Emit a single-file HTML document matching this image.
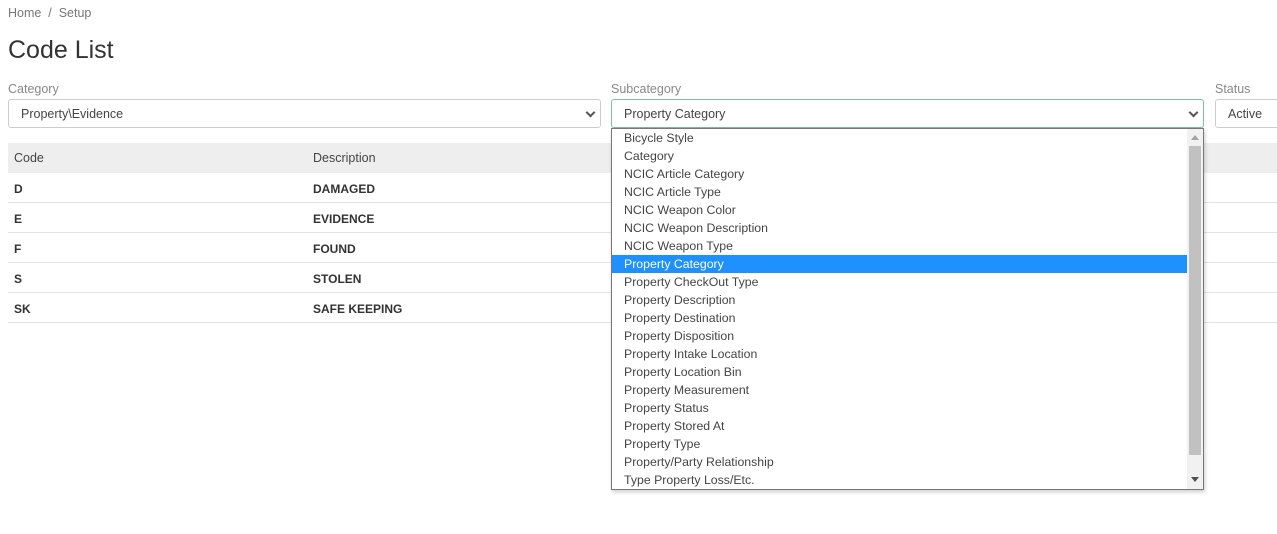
<!DOCTYPE html>
<html><head><style>
*{box-sizing:border-box;margin:0;padding:0}
body{width:1277px;height:534px;overflow:hidden;background:#fff;font-family:"Liberation Sans",sans-serif;color:#333;position:relative}
.a{position:absolute;white-space:nowrap}
.sel{position:absolute;border:1px solid #ccc;border-radius:3px;height:29px;top:99px;font-size:12.5px;padding:7px 12px;color:#444}
.lbl{position:absolute;top:82px;font-size:12.5px;color:#888}
.row{position:absolute;left:8px;width:1269px;height:30px;border-bottom:1px solid #e3e3e3;font-size:12px;font-weight:bold;color:#333}
.row span{position:absolute;top:9px}
.dd{position:absolute;left:611px;top:128px;width:593px;height:362px;border:1px solid #777;background:#fff;box-shadow:1px 2px 4px rgba(0,0,0,.2)}
.it{height:18px;font-size:12.3px;line-height:18px;padding-left:12px;color:#444;width:575px}
.hl{background:#1e90ff;color:#fff}
.chev{position:absolute;right:6px;top:9px;width:7px;height:7px;border-right:2px solid #555;border-bottom:2px solid #555;transform:rotate(45deg)}
</style></head><body>
<div class="a" style="left:8px;top:6px;font-size:12.5px;color:#777">Home &nbsp;/&nbsp; Setup</div>
<div class="a" style="left:8px;top:36px;font-size:25px;color:#333">Code List</div>
<div class="lbl" style="left:8px">Category</div>
<div class="lbl" style="left:611px">Subcategory</div>
<div class="lbl" style="left:1215px">Status</div>
<div class="sel" style="left:8px;width:593px">Property\Evidence<div class="chev"></div></div>
<div class="sel" style="left:611px;width:593px;border-color:#7fbf9f">Property Category<div class="chev"></div></div>
<div class="sel" style="left:1215px;width:80px">Active</div>
<div class="a" style="left:8px;top:143px;width:1269px;height:30px;background:#eee;font-size:12.5px;color:#444"><span class="a" style="left:6px;top:8px">Code</span><span class="a" style="left:305px;top:8px">Description</span></div>
<div class="row" style="top:173px"><span style="left:6px">D</span><span style="left:305px">DAMAGED</span></div>
<div class="row" style="top:203px"><span style="left:6px">E</span><span style="left:305px">EVIDENCE</span></div>
<div class="row" style="top:233px"><span style="left:6px">F</span><span style="left:305px">FOUND</span></div>
<div class="row" style="top:263px"><span style="left:6px">S</span><span style="left:305px">STOLEN</span></div>
<div class="row" style="top:293px"><span style="left:6px">SK</span><span style="left:305px">SAFE KEEPING</span></div>
<div class="dd">
<div class="it">Bicycle Style</div><div class="it">Category</div><div class="it">NCIC Article Category</div><div class="it">NCIC Article Type</div><div class="it">NCIC Weapon Color</div><div class="it">NCIC Weapon Description</div><div class="it">NCIC Weapon Type</div><div class="it hl">Property Category</div><div class="it">Property CheckOut Type</div><div class="it">Property Description</div><div class="it">Property Destination</div><div class="it">Property Disposition</div><div class="it">Property Intake Location</div><div class="it">Property Location Bin</div><div class="it">Property Measurement</div><div class="it">Property Status</div><div class="it">Property Stored At</div><div class="it">Property Type</div><div class="it">Property/Party Relationship</div><div class="it">Type Property Loss/Etc.</div>
<div class="a" style="left:575px;top:0;width:16px;height:360px;background:#f1f1f1"></div>
<div class="a" style="left:577px;top:17px;width:12px;height:309px;background:#c1c1c1"></div>
<div class="a" style="left:579px;top:6px;width:0;height:0;border-left:4px solid transparent;border-right:4px solid transparent;border-bottom:5px solid #a3a3a3"></div>
<div class="a" style="left:579px;top:348px;width:0;height:0;border-left:4px solid transparent;border-right:4px solid transparent;border-top:5px solid #505050"></div>
</div>
</body></html>
